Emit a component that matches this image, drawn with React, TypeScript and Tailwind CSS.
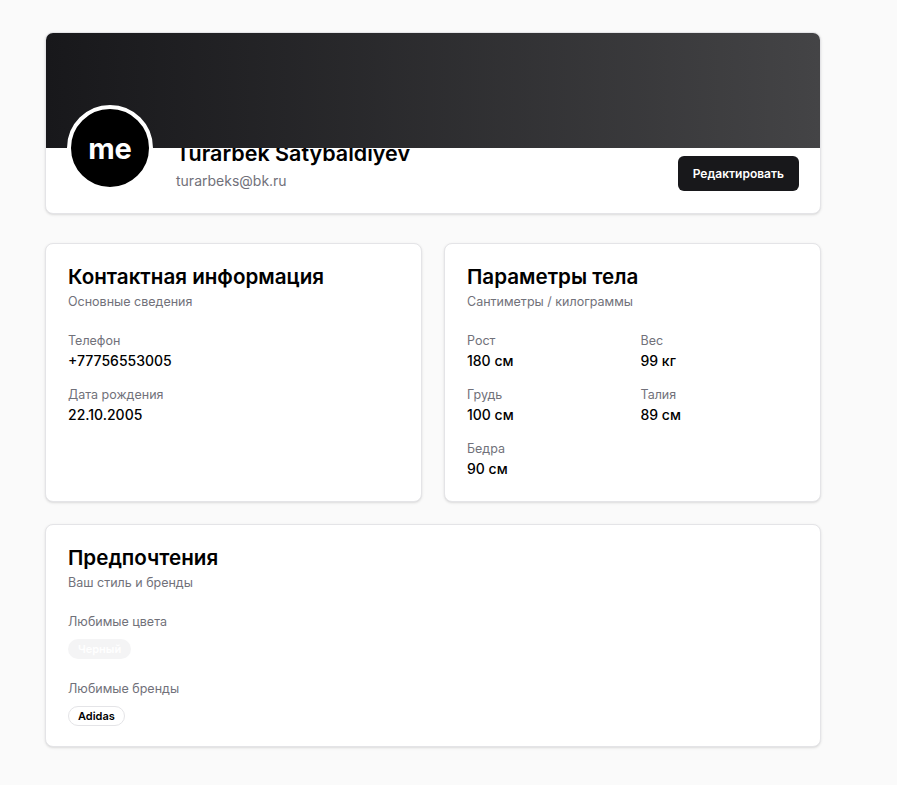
import { ReactNode } from "react";

const Card = ({ children, className = "" }: { children: ReactNode; className?: string }) => (
  <div className={`rounded-lg border border-[#e4e4e7] bg-white shadow-sm ${className}`}>{children}</div>
);

const CardHead = ({ title, sub }: { title: string; sub: string }) => (
  <div>
    <h2 className="text-[20.6px] leading-[30px] font-semibold text-black">{title}</h2>
    <p className="text-[12.5px] leading-5 text-[#71717a]">{sub}</p>
  </div>
);

const Field = ({ label, value }: { label: string; value: string }) => (
  <div>
    <div className="text-[12.5px] leading-5 text-[#71717a]">{label}</div>
    <div className="text-sm leading-5 font-medium text-black">{value}</div>
  </div>
);

const App = () => {
  return (
    <div
      className="min-h-screen bg-[#fafafa] pt-[32px] pl-[45px]"
      style={{ fontFamily: "Inter, 'Noto Sans', sans-serif" }}
    >
      <div className="flex w-[776px] flex-col">
        {/* profile header */}
        <Card className="overflow-hidden">
          <div className="relative h-[115px] bg-gradient-to-r from-[#18181b] to-[#444446]" />
          <div className="-mt-[43px] flex items-end justify-between px-[21px] pb-[22px]">
            <div className="flex items-end gap-[23px]">
              <div className="relative flex h-[86px] w-[86px] items-center justify-center rounded-full border-4 border-white bg-black">
                <span className="text-[29px] leading-none font-bold text-white">me</span>
              </div>
              <div>
                <div className="mb-1 text-[21.5px] leading-7 font-semibold text-black">Turarbek Satybaldiyev</div>
                <div className="text-sm leading-5 text-[#71717a]">turarbeks@bk.ru</div>
              </div>
            </div>
            <button className="h-[35px] rounded-md bg-[#18181b] px-[15px] text-xs font-semibold text-white">
              Редактировать
            </button>
          </div>
        </Card>

        {/* info cards */}
        <div className="mt-[29px] grid grid-cols-2 gap-[22px]">
          <Card className="h-[259px] px-[22px] pt-[18px]">
            <CardHead title="Контактная информация" sub="Основные сведения" />
            <div className="mt-[19px] flex flex-col gap-[14px]">
              <Field label="Телефон" value="+77756553005" />
              <Field label="Дата рождения" value="22.10.2005" />
            </div>
          </Card>
          <Card className="h-[259px] px-[22px] pt-[18px]">
            <CardHead title="Параметры тела" sub="Сантиметры / килограммы" />
            <div className="mt-[19px] grid grid-cols-2 gap-x-4 gap-y-[14px]">
              <Field label="Рост" value="180 см" />
              <Field label="Вес" value="99 кг" />
              <Field label="Грудь" value="100 см" />
              <Field label="Талия" value="89 см" />
              <Field label="Бедра" value="90 см" />
            </div>
          </Card>
        </div>

        {/* preferences */}
        <Card className="mt-[22px] h-[223px] px-[22px] pt-[18px]">
          <CardHead title="Предпочтения" sub="Ваш стиль и бренды" />
          <div className="mt-[19px]">
            <div className="text-[12.5px] leading-5 text-[#71717a]">Любимые цвета</div>
            <div className="mt-[7px] flex">
              <span className="rounded-full bg-[#f4f4f5] px-[10px] text-[11px] leading-5 font-semibold text-white">
                Черный
              </span>
            </div>
          </div>
          <div className="mt-[20px]">
            <div className="text-[12.5px] leading-5 text-[#71717a]">Любимые бренды</div>
            <div className="mt-[7px] flex">
              <span className="rounded-full border border-[#e4e4e7] bg-white px-[9px] text-[11px] leading-[18px] font-semibold text-black">
                Adidas
              </span>
            </div>
          </div>
        </Card>
      </div>
    </div>
  );
};

export default App;
